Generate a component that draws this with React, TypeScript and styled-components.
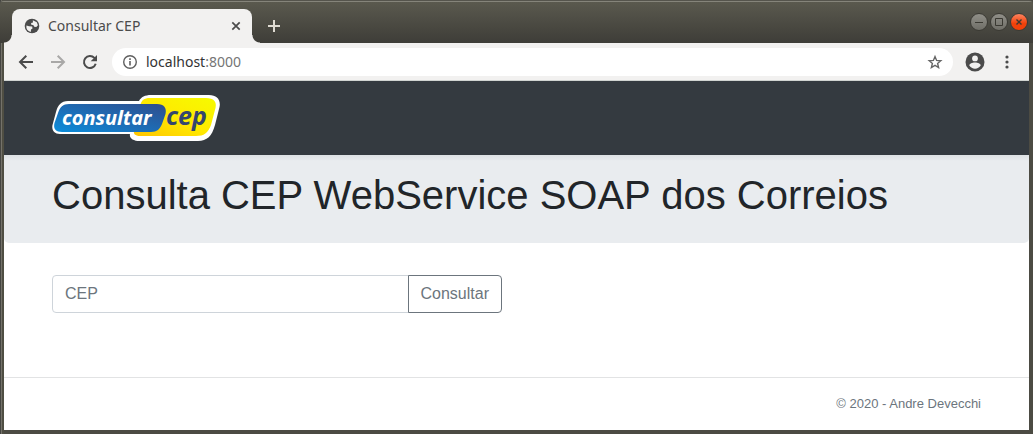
import React from "react";
import styled, { createGlobalStyle } from "styled-components";

const GlobalStyle = createGlobalStyle`
  *, *::before, *::after { box-sizing: border-box; }
  body {
    margin: 0;
    background: #4c4b44;
    font-family: "Liberation Sans", Arial, sans-serif;
    font-size: 16px;
    line-height: 24px;
    color: #212529;
  }
`;

const chromeFont = `"Noto Sans", "Open Sans", sans-serif`;

const Window = styled.div`
  display: flex;
  flex-direction: column;
  min-height: 100vh;
  border: solid transparent;
  border-width: 0 4px 4px;
  background:
    linear-gradient(#fff, #fff) padding-box,
    linear-gradient(90deg, #454541 1px, #74726a 1px 2px, #4f4e43 2px 4px, #4c4b43 4px) border-box;
`;

const TitleBar = styled.header`
  display: flex;
  align-items: flex-end;
  height: 43px;
  margin: 0 -4px;
  padding: 0 5px 0 12px;
  border-top: 1px solid #55544c;
  border-radius: 4px 4px 0 0;
  background: linear-gradient(#85847a 0 1px, #5a594e 1px, #3e3d38);
`;

const Tab = styled.div`
  position: relative;
  display: flex;
  align-items: center;
  gap: 8px;
  width: 240px;
  height: 34px;
  padding: 0 8px 0 12px;
  border-radius: 8px 8px 0 0;
  background: #f2f1f0;
  color: #4b4b4b;
  font: 14px/20px ${chromeFont};

  &::before,
  &::after {
    content: "";
    position: absolute;
    bottom: 0;
    width: 8px;
    height: 8px;
  }
  &::before {
    right: 100%;
    background: radial-gradient(circle at 0 0, transparent 7px, #f2f1f0 8px);
  }
  &::after {
    left: 100%;
    background: radial-gradient(circle at 100% 0, transparent 7px, #f2f1f0 8px);
  }
`;

const TabTitle = styled.span`
  flex: 1;
`;

const IconButton = styled.button`
  display: flex;
  align-items: center;
  justify-content: center;
  flex: none;
  width: 16px;
  height: 16px;
  padding: 0;
  border: 0;
  background: none;
  color: #4b4b4b;
  &:disabled { color: #a9a8a7; }
`;

const NewTabButton = styled(IconButton)`
  width: 28px;
  height: 34px;
  margin-left: 8px;
  color: #dfdbd2;
`;

const WindowControls = styled.div`
  display: flex;
  align-self: center;
  gap: 2px;
  margin-left: auto;
`;

const WindowButton = styled.button<{ $close?: boolean }>`
  display: flex;
  align-items: center;
  justify-content: center;
  width: 18px;
  height: 18px;
  padding: 0;
  border: 1px solid #3b3a34;
  border-radius: 50%;
  color: #3a3932;
  background: ${(p) =>
    p.$close ? "linear-gradient(#fd8460, #f0410a 60%)" : "linear-gradient(#908f88, #6f6e67)"};
`;

const Toolbar = styled.div`
  display: flex;
  align-items: center;
  height: 38px;
  padding: 0 12px;
  border-bottom: 1px solid #d0d4d2;
  background: #f2f1f0;
`;

const NavButtons = styled.div`
  display: flex;
  gap: 12px;
  margin-right: 12px;
`;

const ToolButton = styled(IconButton)`
  width: 20px;
  height: 20px;
`;

const AddressBar = styled.div`
  display: flex;
  flex: 1;
  align-items: center;
  gap: 8px;
  height: 28px;
  padding: 0 10px;
  border-radius: 14px;
  background: #fff;
  color: #757575;
  font: 14px/20px ${chromeFont};
`;

const Url = styled.span`
  flex: 1;
  b {
    font-weight: 400;
    color: #333;
  }
`;

const ToolbarEnd = styled.div`
  display: flex;
  align-items: center;
  gap: 12px;
  margin-left: 12px;
`;

const Navbar = styled.nav`
  display: flex;
  align-items: center;
  height: 74px;
  padding: 0 48px;
  background: #343a40;
`;

const LogoLink = styled.a`
  display: block;
  height: 46px;
  svg { display: block; }
`;

const Jumbotron = styled.section`
  padding: 16px 48px 24px;
  border-radius: 0 0 5px 5px;
  background: linear-gradient(#dde1e4, #e9ecef 6px);
`;

const Title = styled.h1`
  margin: 0;
  font-size: 40px;
  font-weight: 400;
  line-height: 48px;
`;

const SearchForm = styled.form`
  display: flex;
  width: 50%;
  max-width: 450px;
  margin: 32px 48px 64px;
`;

const CepInput = styled.input`
  flex: 1;
  min-width: 0;
  height: 38px;
  padding: 6px 12px;
  border: 1px solid #ced4da;
  border-radius: 4px 0 0 4px;
  background: #fff;
  font: inherit;
  color: #495057;
  &::placeholder { color: #6c757d; opacity: 1; }
`;

const SubmitButton = styled.button`
  height: 38px;
  margin-left: -1px;
  padding: 0 12px;
  border: 1px solid #6c757d;
  border-radius: 0 4px 4px 0;
  background: #fff;
  font: inherit;
  color: #6c757d;
`;

const Footer = styled.footer`
  padding: 16px 48px;
  border-top: 1px solid #e2e3e4;
  color: #6c757d;
  font-size: 13px;
  line-height: 20px;
  text-align: right;
`;

const Globe = () => (
  <svg width="16" height="16" viewBox="0 0 16 16" aria-hidden="true">
    <circle cx="8" cy="8" r="7.300" fill="#4b4b4b" />
    <path
      d="M2.400 7.500 5 8.300 8.200 8.500 8.500 10.500 7 11.600 6.800 14A6 6 0 0 1 2.400 7.500zM8.800 2.200 12.800 4.200 13.900 7.200 12.300 9 10.200 8.700 9.500 7.200 7 6.600 7.200 5 9 4.600z"
      fill="#f2f1f0"
    />
  </svg>
);

const Logo = () => (
  <svg width="168" height="46" viewBox="0 0 168 46" role="img" aria-label="consultar cep">
    <defs>
      <linearGradient id="blue" x1="0" y1="1" x2="1" y2="0">
        <stop offset="0" stopColor="#0b8edb" />
        <stop offset=".4" stopColor="#1b71bb" />
        <stop offset="1" stopColor="#304d8c" />
      </linearGradient>
      <linearGradient id="yellow" x1="0" y1="1" x2="1" y2="0">
        <stop offset="0" stopColor="#ffc400" />
        <stop offset=".5" stopColor="#ffea00" />
        <stop offset="1" stopColor="#f6fb00" />
      </linearGradient>
    </defs>
    <path
      d="M99 0H157C165 0 169 5 167.500 12L163 30C160 41 155 46 146 46H88C81 46 77 43 78 39H8C2 39 -.5 35 .5 30L4 17C6 10 9 6 16 6H87C89 2 93 0 99 0z"
      fill="#fff"
    />
    <path
      d="M98 3H154C162 3 165 7 163.500 13L159 30C156 38 152 41 144 41H88C83 41 81 39 82 34L88 11C89.500 5 92 3 98 3z"
      fill="url(#yellow)"
    />
    <path
      d="M17 9H105C112 9 115 13 113.500 19L110 29C108 34 105 37 99 37H10C4 37 1 34 2.500 28L6 18C8 12 11 9 17 9z"
      fill="url(#blue)"
    />
    <g fontFamily='"Noto Sans", "Open Sans", sans-serif' fontStyle="italic">
      <text x="10" y="30" fontSize="20" fontWeight="700" fill="#fff">consultar</text>
      <text x="114" y="30" fontSize="25" fontWeight="700" fill="#34466f">cep</text>
    </g>
  </svg>
);

const App = () => (
  <>
    <GlobalStyle />
    <Window>
      <TitleBar>
        <Tab>
          <Globe />
          <TabTitle>Consultar CEP</TabTitle>
          <IconButton aria-label="Close tab">
            <svg width="10" height="10" viewBox="0 0 10 10" stroke="currentColor" strokeWidth="1.700">
              <path d="M1.300 1.300l7.400 7.400M8.700 1.300L1.300 8.700" />
            </svg>
          </IconButton>
        </Tab>
        <NewTabButton aria-label="New tab">
          <svg width="12" height="12" viewBox="0 0 12 12" stroke="currentColor" strokeWidth="2">
            <path d="M6 0v12M0 6h12" />
          </svg>
        </NewTabButton>
        <WindowControls>
          <WindowButton aria-label="Minimize">
            <svg width="10" height="10" viewBox="0 0 10 10" stroke="currentColor">
              <path d="M1 5.500h8" />
            </svg>
          </WindowButton>
          <WindowButton aria-label="Maximize">
            <svg width="10" height="10" viewBox="0 0 10 10" stroke="currentColor" fill="none">
              <path d="M1.500 1.500h7v7h-7z" />
            </svg>
          </WindowButton>
          <WindowButton $close aria-label="Close">
            <svg width="8" height="8" viewBox="0 0 8 8" stroke="currentColor" strokeWidth="1.400">
              <path d="M1.500 1.500l5 5M6.500 1.500l-5 5" />
            </svg>
          </WindowButton>
        </WindowControls>
      </TitleBar>
      <Toolbar>
        <NavButtons>
          <ToolButton aria-label="Back">
            <svg width="20" height="20" viewBox="0 0 20 20" stroke="currentColor" strokeWidth="2" fill="none">
              <path d="M17 10H4.500M10.300 3.700L4 10l6.300 6.300" />
            </svg>
          </ToolButton>
          <ToolButton aria-label="Forward" disabled>
            <svg width="20" height="20" viewBox="0 0 20 20" stroke="currentColor" strokeWidth="2" fill="none">
              <path d="M3 10h12.500M9.700 3.700L16 10l-6.300 6.300" />
            </svg>
          </ToolButton>
          <ToolButton aria-label="Reload">
            <svg width="20" height="20" viewBox="0 0 20 20" fill="none">
              <path d="M15.700 11.700A6 6 0 1 1 14.400 5.900L16 7.500" stroke="currentColor" strokeWidth="2" />
              <path d="M17 3v6.300h-6.300z" fill="currentColor" />
            </svg>
          </ToolButton>
        </NavButtons>
        <AddressBar>
          <svg width="16" height="16" viewBox="0 0 16 16" fill="none" stroke="#5f5f5f" aria-hidden="true">
            <circle cx="8" cy="8" r="6.300" strokeWidth="1.400" />
            <path d="M8 7v4.500M8 4.300v1.700" strokeWidth="1.600" />
          </svg>
          <Url><b>localhost</b>:8000</Url>
          <IconButton aria-label="Bookmark this page">
            <svg width="16" height="16" viewBox="0 0 16 16" fill="none" stroke="#666" strokeWidth="1.400">
              <path d="M8 2.500l1.600 3.900 4.200.3-3.200 2.700 1 4.100L8 11.300l-3.600 2.200 1-4.100-3.200-2.700 4.200-.3z" />
            </svg>
          </IconButton>
        </AddressBar>
        <ToolbarEnd>
          <ToolButton aria-label="Profile">
            <svg width="20" height="20" viewBox="0 0 20 20">
              <circle cx="10" cy="10" r="9.500" fill="currentColor" />
              <circle cx="10" cy="6.400" r="2.900" fill="#f2f1f0" />
              <path d="M4.300 13.500c.2-4 11.200-4 11.400 0a6.700 6.700 0 0 1-11.400 0z" fill="#f2f1f0" />
            </svg>
          </ToolButton>
          <ToolButton aria-label="Menu">
            <svg width="4" height="14" viewBox="0 0 4 14" fill="currentColor">
              <circle cx="2" cy="2" r="1.600" />
              <circle cx="2" cy="7" r="1.600" />
              <circle cx="2" cy="12" r="1.600" />
            </svg>
          </ToolButton>
        </ToolbarEnd>
      </Toolbar>
      <Navbar>
        <LogoLink href="#"><Logo /></LogoLink>
      </Navbar>
      <main>
        <Jumbotron>
          <Title>Consulta CEP WebService SOAP dos Correios</Title>
        </Jumbotron>
        <SearchForm onSubmit={(e) => e.preventDefault()}>
          <CepInput type="text" placeholder="CEP" aria-label="CEP" />
          <SubmitButton type="submit">Consultar</SubmitButton>
        </SearchForm>
      </main>
      <Footer>© 2020 - Andre Devecchi</Footer>
    </Window>
  </>
);

export default App;
